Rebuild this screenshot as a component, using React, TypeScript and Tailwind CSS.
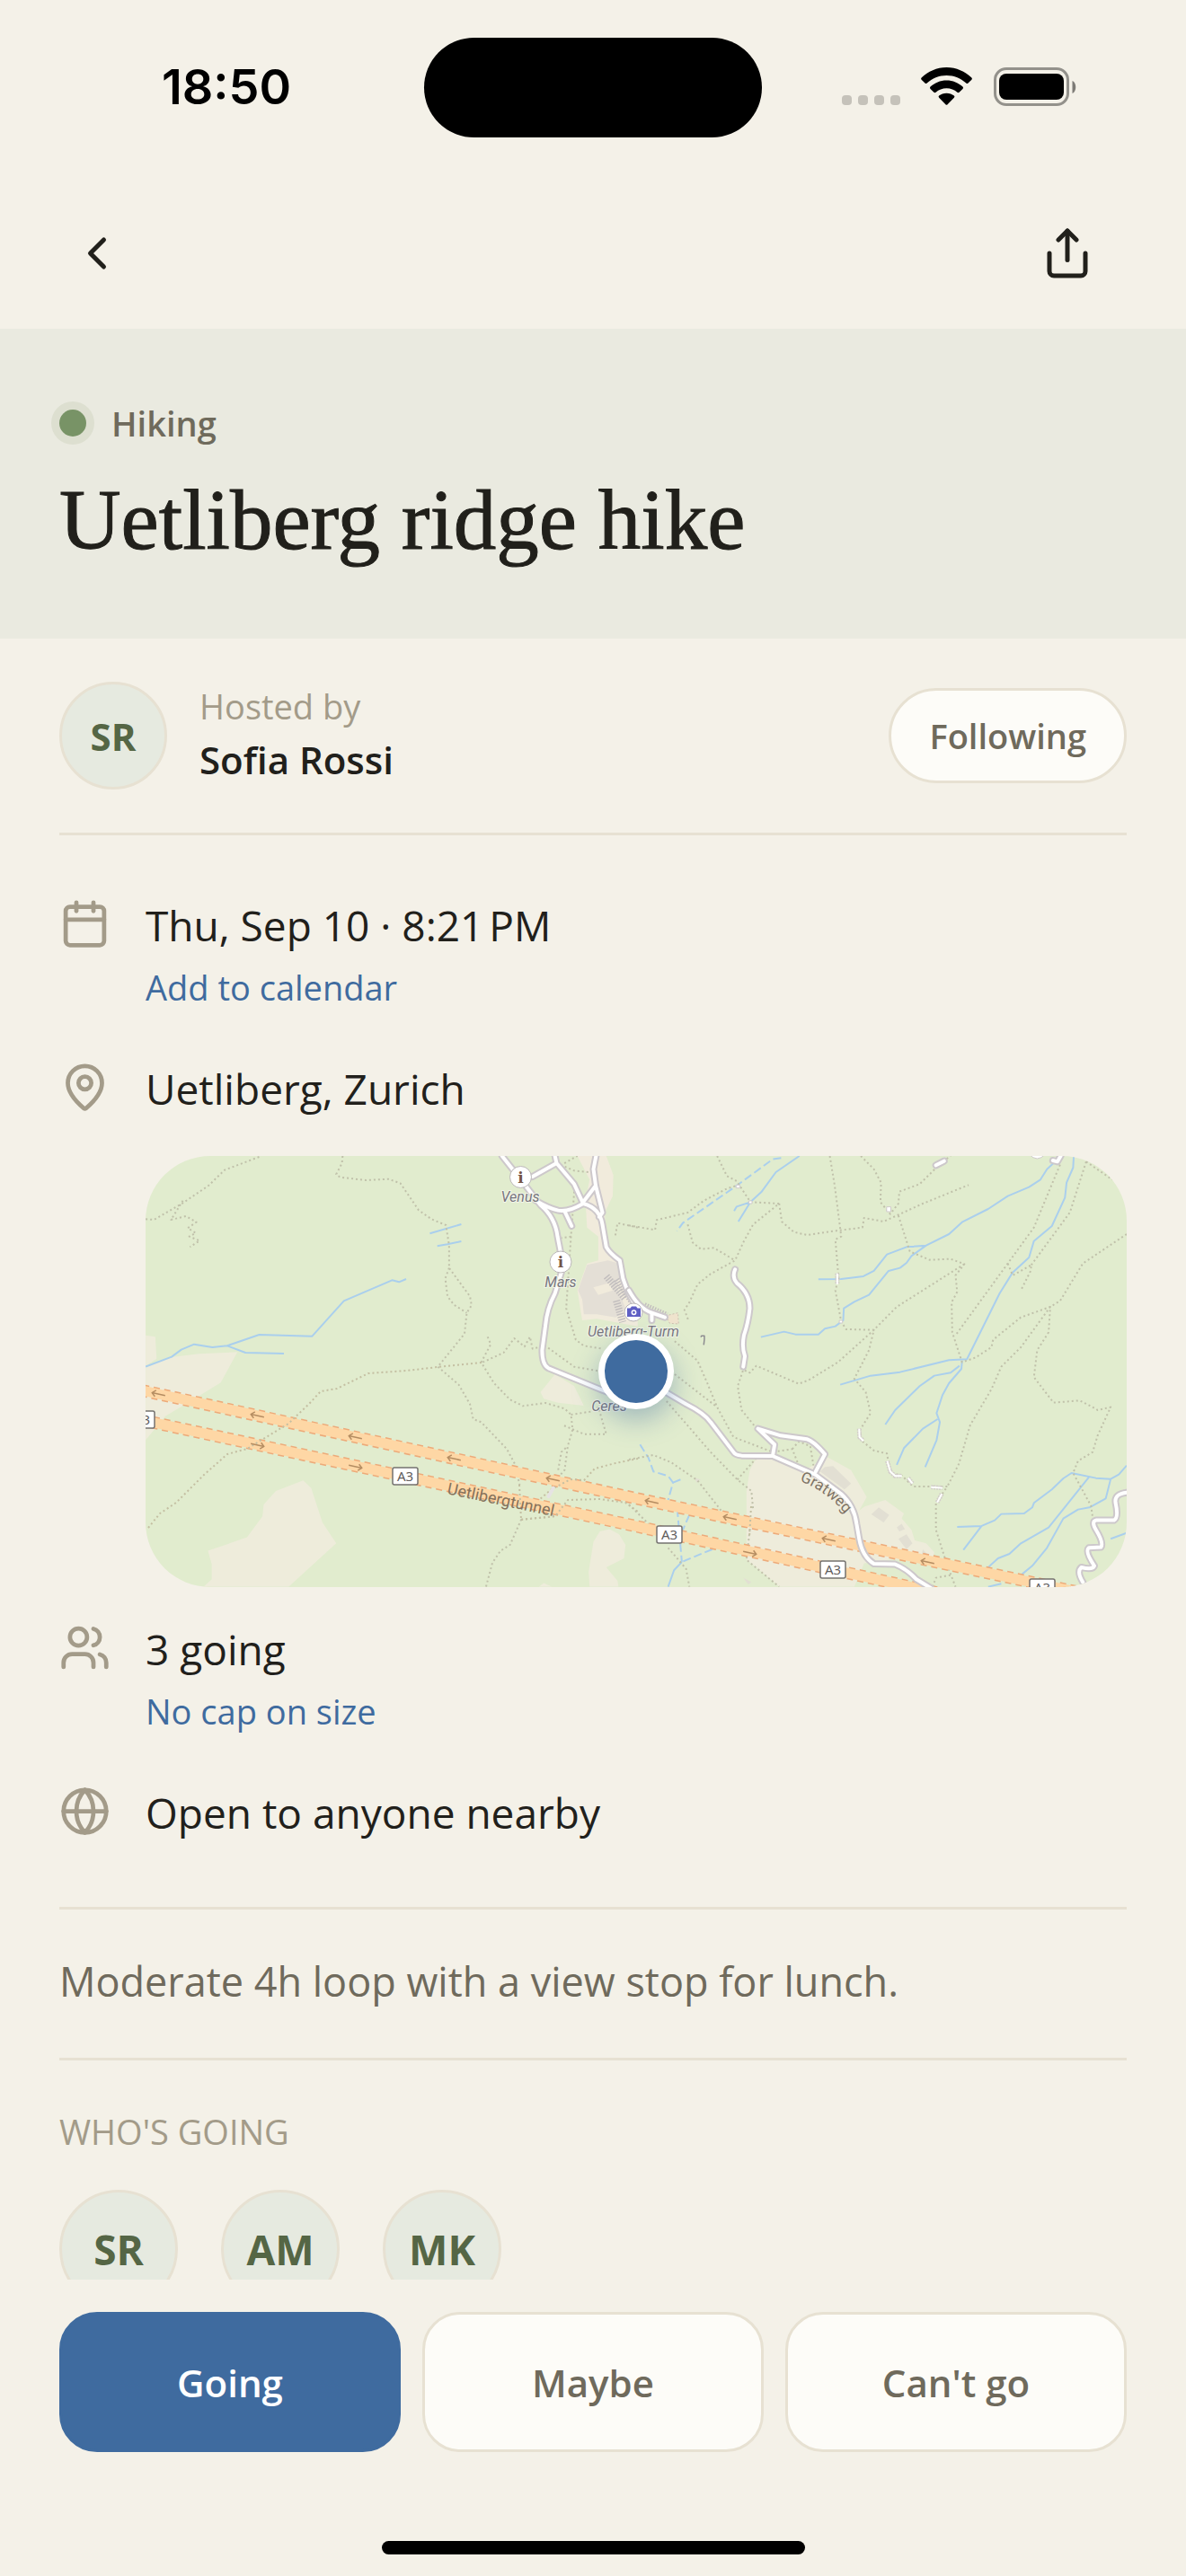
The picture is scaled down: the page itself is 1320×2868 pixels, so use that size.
import { useState } from "react";
import type { ReactNode } from "react";
import { Calendar, ChevronLeft, Globe, MapPin, Share, Users } from "lucide-react";

const RSVP_OPTIONS = ["Going", "Maybe", "Can't go"];
const ATTENDEES = ["SR", "AM", "MK"];

const StatusBar = () => (
  <div className="grid h-[198px] shrink-0 grid-cols-[1fr_376px_1fr] items-center pb-1">
    <div className="pl-8 text-center font-['Inter'] text-[54px] leading-none font-semibold text-black">
      18:50
    </div>
    <div className="h-[111px] rounded-full bg-black" />
    <div className="flex items-center justify-center pr-8">
      <svg width="262" height="44" viewBox="0 0 262 44" aria-hidden="true">
        <g fill="#c5c2ba">
          <rect x="0" y="31" width="11" height="11" rx="4" />
          <rect x="18" y="31" width="11" height="11" rx="4" />
          <rect x="36" y="31" width="11" height="11" rx="4" />
          <rect x="54" y="31" width="11" height="11" rx="4" />
        </g>
        <g fill="#000">
          <path d="M116.500 0C127.500 0 137 4.500 144.400 11.500Q145.500 12.700 144.400 13.800L140.500 17.600Q139.400 18.600 138.300 17.600C132.500 12.200 125 9 116.500 9C108 9 100.500 12.200 94.700 17.600Q93.600 18.600 92.500 17.600L88.600 13.800Q87.500 12.700 88.600 11.500C96 4.500 105.500 0 116.500 0Z" />
          <path d="M116.500 14.500C123.500 14.500 129.700 17.200 134.500 21.600Q135.700 22.800 134.500 23.900L130.600 27.700Q129.500 28.600 128.400 27.700C125.200 24.900 121 23.300 116.500 23.300C112 23.300 107.800 24.900 104.600 27.700Q103.500 28.600 102.400 27.700L98.500 23.900Q97.300 22.800 98.500 21.600C103.300 17.200 109.500 14.500 116.500 14.500Z" />
          <path d="M116.500 28.700C119.800 28.700 122.600 29.800 124.900 31.600Q126 32.700 124.900 33.800L117.600 41.200Q116.500 42.200 115.400 41.200L108.100 33.800Q107 32.700 108.100 31.600C110.400 29.800 113.200 28.700 116.500 28.700Z" />
        </g>
        <rect x="170.500" y="1.500" width="81" height="40" rx="12.500" fill="none" stroke="#93918b" strokeWidth="3" />
        <rect x="175" y="7" width="72" height="29" rx="8" fill="#000" />
        <path d="M256.500 15C261.500 17 261.500 27 256.500 29Z" fill="#7d7b76" />
      </svg>
    </div>
  </div>
);

// One-way arrows painted on the two carriageways
const WEST_ARROWS = [
  [14, 265], [124, 289], [233, 313], [343, 337], [453, 360],
  [563, 385], [650, 403], [760, 427], [870, 452],
];
const EAST_ARROWS = [[125, 322], [234, 346], [673, 442]];
const SHIELDS = [[-4, 294], [289, 357], [583, 422], [765, 461], [998, 481]];

const WEST_ROADS =
  "M1145 51L1185 105L1225 160L1265 215Q1310 255 1318 320L1327 370L1330 440L1310 510Q1285 560 1280 620L1270 700Q1270 750 1290 760L1450 830L1500 850M1240 120L1315 75L1310 51M1315 75L1370 145L1398 210Q1350 240 1320 233Q1290 225 1250 200M1340 235L1362 285M1398 210Q1450 225 1458 280L1470 355Q1480 375 1512 400L1522 460Q1540 520 1568 560M1398 205L1437 150M1438 51L1430 95L1437 150L1458 240L1448 255";
const EAST_ROADS =
  "M105 835L175 880Q230 910 250 940L320 1040Q325 1050 345 1052L440 1053L570 1115L650 1180Q690 1220 697 1280L705 1330Q715 1390 750 1413L815 1415Q850 1430 880 1465L925 1495M440 1053L446 1015L395 962L465 985L545 997Q565 1003 600 1047L572 1105M325 430Q315 455 330 475Q370 510 370 560Q365 610 352 650Q345 690 355 720L350 755M1524 1175Q1485 1180 1490 1210Q1500 1260 1485 1268L1430 1268Q1415 1272 1430 1300Q1455 1345 1445 1358L1408 1360Q1395 1372 1425 1420Q1420 1435 1385 1425Q1370 1440 1390 1475M940 82L965 68M1298 66L1312 70L1322 51M0 500Q30 560 70 575L110 590M70 575L70 600";

const AreaMap = () => (
  <svg
    className="block h-full w-full [&_path]:[vector-effect:non-scaling-stroke]"
    viewBox="0 0 1092 480"
    preserveAspectRatio="xMidYMid slice"
    role="img"
    aria-label="Map of Uetliberg"
    fill="none"
    strokeLinejoin="round"
  >
    <rect width="1092" height="480" fill="#e1ecce" />

    {/* west half: land, streams, trails */}
    <g transform="matrix(0.357 0 0 0.3333 -12 -17)">
      <path fill="#eeecdb" d="M34 650L64 655L68 728L34 752ZM34 752L120 722L200 712L320 706L268 808L232 832L150 885L95 920L34 1000ZM525 1135L550 1160L585 1275L628 1345L480 1490H215L240 1465L240 1415L228 1370L350 1325L398 1255L402 1215L440 1170ZM1310 780L1370 820L1400 885L1320 875L1275 862L1265 840ZM1450 1305L1480 1298L1510 1315L1530 1350L1525 1395L1470 1425L1505 1470L1508 1490H1418L1415 1440L1430 1340ZM1260 1490L1275 1478L1300 1490Z" />
      <path fill="#f1ebdc" d="M1380 51H1470L1492 115L1490 185L1465 240L1470 350L1515 400L1530 500L1568 560V620L1440 595L1395 600L1380 500L1410 410L1445 400L1445 320L1410 290L1405 200L1418 130Z" />
      <path fill="#e4dfd6" d="M1410 415L1475 400L1510 410L1520 440L1500 480L1530 560L1500 590L1440 580L1400 580L1395 530L1382 500Z" />
      <path fill="#f1ebdc" d="M1430 490L1480 475L1490 500L1445 515Z" />
      <path stroke="#aacfed" strokeWidth="2" d="M34 755L115 722L145 698L185 680L242 690L288 685L388 648L553 653L652 535L802 466L824 472L846 462M288 685L345 708L465 711M920 310L1018 279M943 352L975 346L1018 336" />
      <path stroke="#c0c1aa" strokeWidth="2" strokeDasharray="2 3" d="M34 262L60 264L150 208L230 150L280 98L388 54M150 200L113 264L160 252L192 272L165 292L190 308L170 320L202 334L172 355M648 51L646 75L628 112L640 122L720 132L790 128L828 142L885 232L925 262L970 282L980 350L980 425L1045 520L1050 550L1035 575L1028 645L945 755M980 425L968 460L975 520L995 548L1035 575M1085 740L1150 708L1183 660L1215 688L1232 655L1240 695L1280 685L1370 755L1450 770M1100 655L1110 680L1080 740L1120 810L1170 865L1210 886L1280 876L1340 895L1360 915L1365 965L1350 1020L1340 1100L1300 1150M945 755L1010 815L1045 880L1055 930L1080 940L1160 1030L1185 1080L1200 1150M1205 1265L1170 1350L1140 1370L1115 1410L1095 1490M1205 1265L1310 1255M1360 915L1420 905L1445 890L1470 980L1400 980L1335 950M1370 170L1360 320L1345 560L1375 665L1400 685L1460 695M1360 320L1330 325M1568 290L1505 275L1497 325M1320 1100L1330 1040L1350 1020M1315 75L1370 100L1415 105M1315 90L1380 51" />
    </g>

    {/* terraces round the tower */}
    <path
      stroke="#c2bebe"
      strokeWidth="8"
      strokeDasharray="1.500 1.500"
      d="M513 134L534 159M525 137L541 161M524 161L531 185M555 167L580 178"
    />

    {/* east half */}
    <g transform="matrix(0.3635 0 0 0.3333 538 -17)">
      <path fill="#eeecdb" d="M390 1060L440 1055L540 1100L605 1055L680 1100L728 1190L705 1235L722 1222L785 1200L842 1245L835 1262L865 1300L875 1335L910 1345L935 1375L930 1395L800 1400L720 1412L690 1490H460L400 1435L360 1400L360 1170L370 1100Z" />
      <path fill="#e2dfd3" d="M600 1090L625 1087L680 1145L660 1165L585 1105ZM765 1225L797 1250L780 1275L742 1248ZM835 1280L845 1298L828 1305L820 1292ZM850 1315L868 1345L850 1365L825 1330ZM900 1365L912 1380L895 1390ZM350 1460L375 1475L365 1482ZM200 1125L220 1132L208 1142Z" />
      <path fill="#efe3cd" stroke="#cdbfb0" strokeWidth="1" strokeDasharray="2 2" d="M112 585L150 575L152 612L125 610Z" />
      <path stroke="#aacfed" strokeWidth="2" d="M522 51L450 105L405 172L372 205L335 270M372 205L330 220L322 235M1300 75L1280 95L1260 130L1225 155L1160 185L1100 228L1020 272L980 312L910 350L850 355L790 380L750 435L718 453L650 462L580 463M910 350L865 385L850 408L830 425L795 435L735 515L690 538L658 560L656 600L632 620L600 628L580 647L510 647L475 638L404 656M1362 51L1360 90L1340 140L1335 190L1295 285L1240 335L1225 390L1175 440L1135 510L1035 730L980 733L830 773L740 785L647 815M1020 735L1018 762L980 810L960 850L942 910L952 940L942 1000L907 1090M1012 752L985 775L935 785L890 820L815 900L785 948M945 930L900 962L842 1027L820 1083M1524 1085L1500 1115L1475 1130L1430 1127L1355 1110L1330 1128L1295 1165L1240 1210L1235 1225L1210 1245L1140 1247L1120 1268L1080 1287L1005 1290M1080 1287L1024 1367M1410 1122L1285 1292L1200 1345L1165 1380L1130 1395L1095 1430M1475 1130L1460 1195L1410 1225L1375 1232L1330 1262L1280 1360L1235 1420L1197 1454M1524 1310L1475 1330M162 1407L138 1435L120 1490M1100 1490L1140 1480" />
      <path stroke="#aacfed" strokeWidth="2" strokeDasharray="9 4" d="M466 58L440 62L330 150L165 275L147 302M34 1015L60 1060L75 1105L120 1120L135 1142L120 1200M135 1142L167 1128M148 1230L162 1407M185 1250L165 1300M255 1365L162 1407" />
      <path stroke="#c0c1aa" strokeWidth="2" strokeDasharray="2 3" d="M270 51L300 118L330 135L372 205L460 210L380 280L350 340L325 400L250 445L210 480L185 540L170 565L182 600M0 283L80 298L85 265L180 240L230 200L300 160L330 150M180 280L195 340L220 362L260 358L325 400M460 210L468 270L505 305L545 315L640 300L715 290L720 258L780 270L820 250L900 210L1040 148M615 51L630 150L650 320L632 330L642 460L632 500L650 605L665 630L750 632L735 700L690 795L725 840L740 910L708 965L710 1000L750 1035L790 1045L800 1110L835 1118L870 1155L975 1155L940 1210L940 1300L975 1420L1000 1490M710 51L750 95L772 140L770 205L800 245L825 210L828 170L890 145L960 70L985 51M825 250L860 370L920 398L985 395L1027 412L1000 450L1005 505L988 540L990 640L1020 740L1060 725L1110 690L1115 665L1200 590L1290 555L1285 640L1250 700L1240 790L1300 875L1380 868L1420 890L1435 900L1475 890L1435 985L1420 1040L1375 1070L1360 1110L1415 1220L1420 1260M1027 412L820 555L750 632L640 740L550 800L520 812L390 752L370 775L350 765L333 820L345 900L390 960M1320 80L1240 290L1160 410L1060 560L1000 650M1160 410L1175 450L1232 415L1230 435L1200 500M1400 70L1350 240L1232 415M1400 70L1480 130M1524 312L1390 410L1320 535L1290 555L1200 690L1140 755L1110 830L1045 950L1010 1080L975 1155M140 670L210 735L240 810L270 890L320 990L440 1040L500 1030L520 1085M140 780L270 890M115 870L250 1040L330 1130L375 1170L380 1230M390 1060L330 1135M0 1065L75 1050L130 1075L210 1135L300 1260M370 1300L360 1400L460 1490M0 1215L60 1280M120 1360L175 1430L185 1490M500 1030L520 1005L555 1020L565 1085M930 1490L940 1460L990 1450" />
      <path stroke="#d3cdcb" strokeWidth="5" strokeDasharray="2 1" d="M705 962L706 990L718 1003M791 1070L800 1105L815 1120L836 1120M855 1127L868 1145M925 1157L960 1160M958 1180L944 1208M638 443V480" />
      <path stroke="#fff" strokeWidth="2" d="M705 962L706 990L718 1003M791 1070L800 1105L815 1120L836 1120M855 1127L868 1145M925 1157L960 1160M958 1180L944 1208M638 443V480" />
      <g stroke="#cfcaca" fill="#fff">
        <path d="M789 221H802V237H789Z" />
        <path d="M1225 45Q1250 75 1275 45Z" />
        <path d="M328 148H340V158H328ZM367 201H377V210H367ZM644 600H654V609H644Z" strokeWidth="1" />
      </g>
      <path stroke="#8d8c90" strokeWidth="1.500" d="M220 656L222 652H231V664L229 682" />
    </g>

    {/* A3 tunnel */}
    <g>
      <path d="M-4 261L545 381L1040 486M-4 294L545 412L880 486" stroke="#edaa79" strokeWidth="14" strokeDasharray="7 5" />
      <path d="M-4 261L545 381L1040 486M-4 294L545 412L880 486" stroke="#fed7a5" strokeWidth="11" />
    </g>

    {/* trails crossing over the tunnel */}
    <path d="M3 414L16 398L34 386L65 355L91 332L113 326L159 298L182 276L195 262L213 259L248 242L291 239L325 235L375 230M416 366L418 405M418 405L456 401L470 383L505 382L534 386L548 396M548 337L523 342L500 348L488 361L473 360L452 371L438 383M674 390L672 425" stroke="#c4bfa2" strokeWidth="2" strokeDasharray="2 3" />

    <g strokeLinecap="round">
      <g transform="matrix(0.357 0 0 0.3333 -12 -17)">
        <path d={WEST_ROADS} stroke="#cdc8cb" strokeWidth="8" />
        <path d={WEST_ROADS} stroke="#fff" strokeWidth="4" />
        <path d="M1305 1160L1290 1188" stroke="#e6e3e3" strokeWidth="4" />
      </g>
      <g transform="matrix(0.3635 0 0 0.3333 538 -17)">
        <path d={EAST_ROADS} stroke="#cdc8cb" strokeWidth="8" />
        <path d={EAST_ROADS} stroke="#fff" strokeWidth="4" />
      </g>
    </g>

    <g stroke="#b58d62" strokeWidth="1.500">
      {WEST_ARROWS.map(([x, y]) => (
        <path key={x} transform={`translate(${x} ${y}) rotate(12)`} d="M8 0H-7M-3 -3.500L-7 0L-3 3.500" />
      ))}
      {EAST_ARROWS.map(([x, y]) => (
        <path key={x} transform={`translate(${x} ${y}) rotate(12)`} d="M-8 0H7M3 -3.500L7 0L3 3.500" />
      ))}
    </g>

    {SHIELDS.map(([x, y]) => (
      <g key={x}>
        <rect x={x - 14} y={y - 10} width="28" height="19" rx="2" fill="#fff" stroke="#74716f" strokeWidth="1.500" />
        <text x={x} y={y + 5} textAnchor="middle" className="fill-[#5f5d5c] font-['Noto_Sans'] text-[15px]">
          A3
        </text>
      </g>
    ))}

    <g
      className="fill-[#77757d] font-['Roboto'] text-[16px] italic"
      stroke="#f3f5ea"
      strokeWidth="2"
      paintOrder="stroke"
      textAnchor="middle"
    >
      <text x="417" y="51">Venus</text>
      <text x="462" y="146">Mars</text>
      <text x="543" y="201">Uetliberg-Turm</text>
      <text x="516" y="284">Ceres</text>
    </g>
    <text
      transform="translate(335 376) rotate(12)"
      className="fill-[#85715a] font-['Roboto'] text-[18px]"
    >
      Uetlibergtunnel
    </text>
    <path id="gratweg" d="M728 362Q762 374 786 408" />
    <text className="fill-[#7d7264] font-['Roboto'] text-[17px]" stroke="#f1eee0" strokeWidth="2" paintOrder="stroke">
      <textPath href="#gratweg">Gratweg</textPath>
    </text>

    <g stroke="#bbb7b8" fill="#fff">
      <circle cx="417.500" cy="23.500" r="12" />
      <circle cx="462" cy="118" r="12" />
      <circle cx="543" cy="174" r="10" />
    </g>
    <g className="fill-[#735446] font-['DejaVu_Serif'] text-[17px] font-bold" textAnchor="middle">
      <text x="417.500" y="30">i</text>
      <text x="462" y="124">i</text>
    </g>
    <path d="M536 169.500H539.500L541 167.500H546L547.500 169.500H551V179H536Z" fill="#5f5fc4" />
    <circle cx="543.500" cy="174.300" r="2.200" stroke="#fff" strokeWidth="1.500" />
  </svg>
);

const DetailRow = ({ icon, title, children }: { icon: ReactNode; title: string; children?: ReactNode }) => (
  <div className="flex gap-[39px]">
    <div className="shrink-0 text-[#a39b89]">{icon}</div>
    <div className="min-w-0 flex-1">
      <p className="text-[46px] leading-[60px]">{title}</p>
      {children}
    </div>
  </div>
);

const Divider = () => <hr className="border-t-[3px] border-[#e7e1d2]" />;

const App = () => {
  const [rsvp, setRsvp] = useState("Going");
  const [following, setFollowing] = useState(true);

  return (
    <div className="flex h-screen flex-col overflow-hidden bg-[#f4f1e8] font-['Open_Sans',sans-serif] text-[#21201b]">
      <StatusBar />
      <nav className="flex h-[168px] shrink-0 items-center justify-between pr-[102px] pl-[78px]">
        <button type="button" aria-label="Back">
          <ChevronLeft size={60} strokeWidth={2} />
        </button>
        <button type="button" aria-label="Share">
          <Share size={60} strokeWidth={2} />
        </button>
      </nav>

      <main className="min-h-0 flex-1 overflow-hidden">
        <header className="bg-[#eaeae0] px-[66px] pt-[81px] pb-[76px]">
          <div className="flex items-center gap-7">
            <span className="size-[30px] rounded-full bg-[#789366] ring-[9px] ring-[#dddfd0]" />
            <span className="text-[38px] leading-[48px] font-semibold text-[#6f6a5c]">Hiking</span>
          </div>
          <h1 className="mt-7 font-['Liberation_Serif',serif] text-[95px] leading-[112px] [-webkit-text-stroke:1px_#21201b]">
            Uetliberg ridge hike
          </h1>
        </header>

        <div className="px-[66px]">
          <section className="flex items-center gap-9 py-12">
            <div className="flex size-[120px] items-center justify-center rounded-full border-[3px] border-[#e7e1d2] bg-[#e6eae0] text-[42px] font-bold text-[#556645]">
              SR
            </div>
            <div className="flex-1">
              <p className="text-[38px] leading-[48px] text-[#a39b89]">Hosted by</p>
              <p className="mt-1.5 text-[42px] leading-[60px] font-semibold">Sofia Rossi</p>
            </div>
            <button
              type="button"
              className="h-[106px] rounded-full border-[3px] border-[#e7e1d2] bg-[#fdfcf8] px-[42px] text-[38px] font-semibold text-[#6f6a5c]"
              onClick={() => setFollowing(!following)}
            >
              {following ? "Following" : "Follow"}
            </button>
          </section>
          <Divider />

          <section className="pt-[70px] pb-[75px]">
            <DetailRow icon={<Calendar size={57} />} title={"Thu, Sep 10 · 8:21\u202fPM"}>
              <a href="#calendar" className="mt-[15px] block text-[38px] leading-[48px] text-[#3f6b9f]">
                Add to calendar
              </a>
            </DetailRow>
            <div className="mt-[59px]">
              <DetailRow icon={<MapPin size={57} />} title="Uetliberg, Zurich">
                <div className="relative mt-[45px] h-[480px] overflow-hidden rounded-[72px]">
                  <AreaMap />
                  <span className="absolute top-1/2 left-1/2 size-[84px] -translate-x-1/2 -translate-y-1/2 rounded-full border-[7px] border-white bg-[#3f6b9f] shadow-[0_12px_30px_#3f6b9f66]" />
                </div>
              </DetailRow>
            </div>
            <div className="mt-[39px]">
              <DetailRow icon={<Users size={57} />} title="3 going">
                <p className="mt-[15px] text-[38px] leading-[48px] text-[#3f6b9f]">No cap on size</p>
              </DetailRow>
            </div>
            <div className="mt-[59px]">
              <DetailRow icon={<Globe size={57} />} title="Open to anyone nearby" />
            </div>
          </section>
          <Divider />

          <p className="pt-[47px] pb-[52px] text-[45px] leading-[66px] text-[#6f6a5c]">
            Moderate 4h loop with a view stop for lunch.
          </p>
          <Divider />

          <section className="pt-[55px]">
            <h2 className="text-[38px] leading-[48px] font-medium text-[#a39b89]">WHO'S GOING</h2>
            <div className="mt-[41px] flex gap-12">
              {ATTENDEES.map((initials) => (
                <div
                  key={initials}
                  className="flex size-[132px] items-center justify-center rounded-full border-[3px] border-[#e7e1d2] bg-[#e6eae0] text-[46px] font-bold text-[#556645]"
                >
                  {initials}
                </div>
              ))}
            </div>
          </section>
        </div>
      </main>

      <footer className="shrink-0 px-[66px] pt-9 pb-6">
        <div className="grid grid-cols-3 gap-6">
          {RSVP_OPTIONS.map((option) => (
            <button
              key={option}
              type="button"
              aria-pressed={rsvp === option}
              className={`h-[156px] rounded-[42px] border-[3px] text-[42px] font-semibold ${
                rsvp === option
                  ? "border-[#3f6b9f] bg-[#3f6b9f] text-white"
                  : "border-[#e7e1d2] bg-[#fdfcf8] text-[#6f6a5c]"
              }`}
              onClick={() => setRsvp(option)}
            >
              {option}
            </button>
          ))}
        </div>
        <div className="mx-auto mt-[99px] h-[15px] w-[471px] rounded-full bg-black" />
      </footer>
    </div>
  );
};

export default App;
